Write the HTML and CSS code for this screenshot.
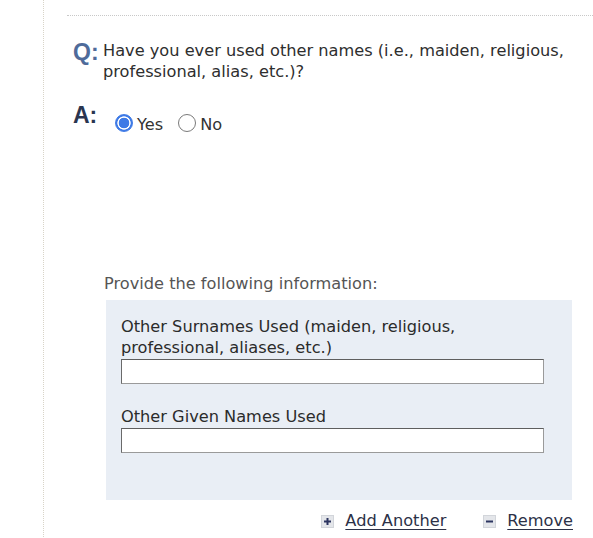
FILE: index.html
```html
<!DOCTYPE html>
<html lang="en">
<head>
<meta charset="utf-8">
<title>Other Names Used</title>
<link rel="stylesheet" href="styles.css">
</head>
<body>
<div class="page">
  <div class="section">
    <div class="rule"></div>

    <div class="qa">
      <div class="q-row">
        <span class="q-mark">Q:</span>
        <p class="question">Have you ever used other names (i.e., maiden, religious, professional, alias, etc.)?</p>
      </div>
      <div class="a-row">
        <span class="a-mark">A:</span>
        <div class="choices">
          <label class="choice"><input type="radio" name="other_names" class="radio" checked><span>Yes</span></label>
          <label class="choice"><input type="radio" name="other_names" class="radio"><span>No</span></label>
        </div>
      </div>
    </div>

    <div class="details">
      <p class="hint">Provide the following information:</p>
      <div class="panel">
        <div class="field">
          <label class="field-label" for="surnames">Other Surnames Used (maiden, religious, professional, aliases, etc.)</label>
          <input id="surnames" type="text" class="text-input">
        </div>
        <div class="field">
          <label class="field-label" for="given">Other Given Names Used</label>
          <input id="given" type="text" class="text-input">
        </div>
      </div>
      <div class="actions">
        <a href="#" class="action">
          <svg class="action-icon" width="13" height="13" viewBox="0 0 13 13" aria-hidden="true">
            <rect x="0.5" y="0.5" width="12" height="12" fill="#e4e6ea" stroke="#d2d5da"/>
            <rect x="3" y="5.5" width="7" height="2" fill="#2c3560"/>
            <rect x="5.5" y="3" width="2" height="7" fill="#2c3560"/>
          </svg>
          <span>Add Another</span>
        </a>
        <a href="#" class="action">
          <svg class="action-icon" width="13" height="13" viewBox="0 0 13 13" aria-hidden="true">
            <rect x="0.5" y="0.5" width="12" height="12" fill="#e4e6ea" stroke="#d2d5da"/>
            <rect x="3" y="5.5" width="7" height="2" fill="#2c3560"/>
          </svg>
          <span>Remove</span>
        </a>
      </div>
    </div>
  </div>
</div>
</body>
</html>
```

FILE: styles.css
```css
html, body {
  margin: 0;
  padding: 0;
  background: #ffffff;
}

body {
  font-family: "DejaVu Sans", Verdana, sans-serif;
  font-size: 16.2px;
  color: #333333;
}

.page {
  padding-left: 43px;
  height: 538px;
  overflow: hidden;
}

.section {
  border-left: 1px dotted #d8d4c8;
  min-height: 538px;
  padding-top: 15px;
  padding-left: 23px;
}

.rule {
  border-top: 1px dotted #c8c8c8;
}

/* question / answer block */
.qa {
  padding-top: 24px;
  padding-left: 6px;
}

.q-row,
.a-row {
  display: flex;
  align-items: flex-start;
}

.q-mark,
.a-mark {
  width: 30px;
  flex: none;
  font-family: "Liberation Sans", Arial, sans-serif;
  font-weight: bold;
  font-size: 23px;
  line-height: 24px;
}

.q-mark {
  color: #4f6b9a;
}

.a-mark {
  color: #2a3550;
}

.question {
  margin: 0;
  line-height: 21px;
  max-width: 478px;
  color: #2e2e2e;
}

.a-row {
  margin-top: 21px;
}

.choices {
  display: flex;
  gap: 15px;
  padding-top: 8px;
  padding-left: 12px;
}

.choice {
  display: flex;
  align-items: center;
  gap: 4px;
  line-height: 18px;
}

.choice span {
  padding-top: 5px;
}

.radio {
  appearance: none;
  -webkit-appearance: none;
  margin: 0;
  width: 18px;
  height: 18px;
  border-radius: 50%;
  border: 1px solid #7a7a7a;
  background: #ffffff;
  box-sizing: border-box;
}

.radio:checked {
  border: 1px solid #3e7ae6;
  background: radial-gradient(circle, #3e7ae6 0 5px, #ffffff 5.6px 6.3px, #3e7ae6 7px);
}

/* repeating detail block */
.details {
  margin-top: 140px;
  padding-left: 39px;
  width: 466px;
}

.hint {
  margin: 0 0 6px -2px;
  color: #555555;
  line-height: 20px;
}

.panel {
  background: #e9eef5;
  padding: 16px 28px 47px 15px;
}

.field + .field {
  margin-top: 22px;
}

.field-label {
  display: block;
  color: #2b2b2b;
  line-height: 21px;
  margin-bottom: 1px;
}

.text-input {
  display: block;
  box-sizing: border-box;
  width: 100%;
  height: 25px;
  margin: 0;
  border-style: solid;
  border-width: 1px;
  border-color: #5e5e5e #9a9a9a #9a9a9a #6a6a6a;
  background: #ffffff;
}

.actions {
  display: flex;
  justify-content: flex-end;
  gap: 37px;
  margin-top: 11px;
  margin-right: -1px;
  line-height: 20px;
}

.action {
  display: flex;
  align-items: center;
  gap: 11px;
  color: #2c3147;
  text-decoration: none;
}

.action span {
  text-decoration: underline;
  text-underline-offset: 3px;
}

.action-icon {
  display: block;
}
```
